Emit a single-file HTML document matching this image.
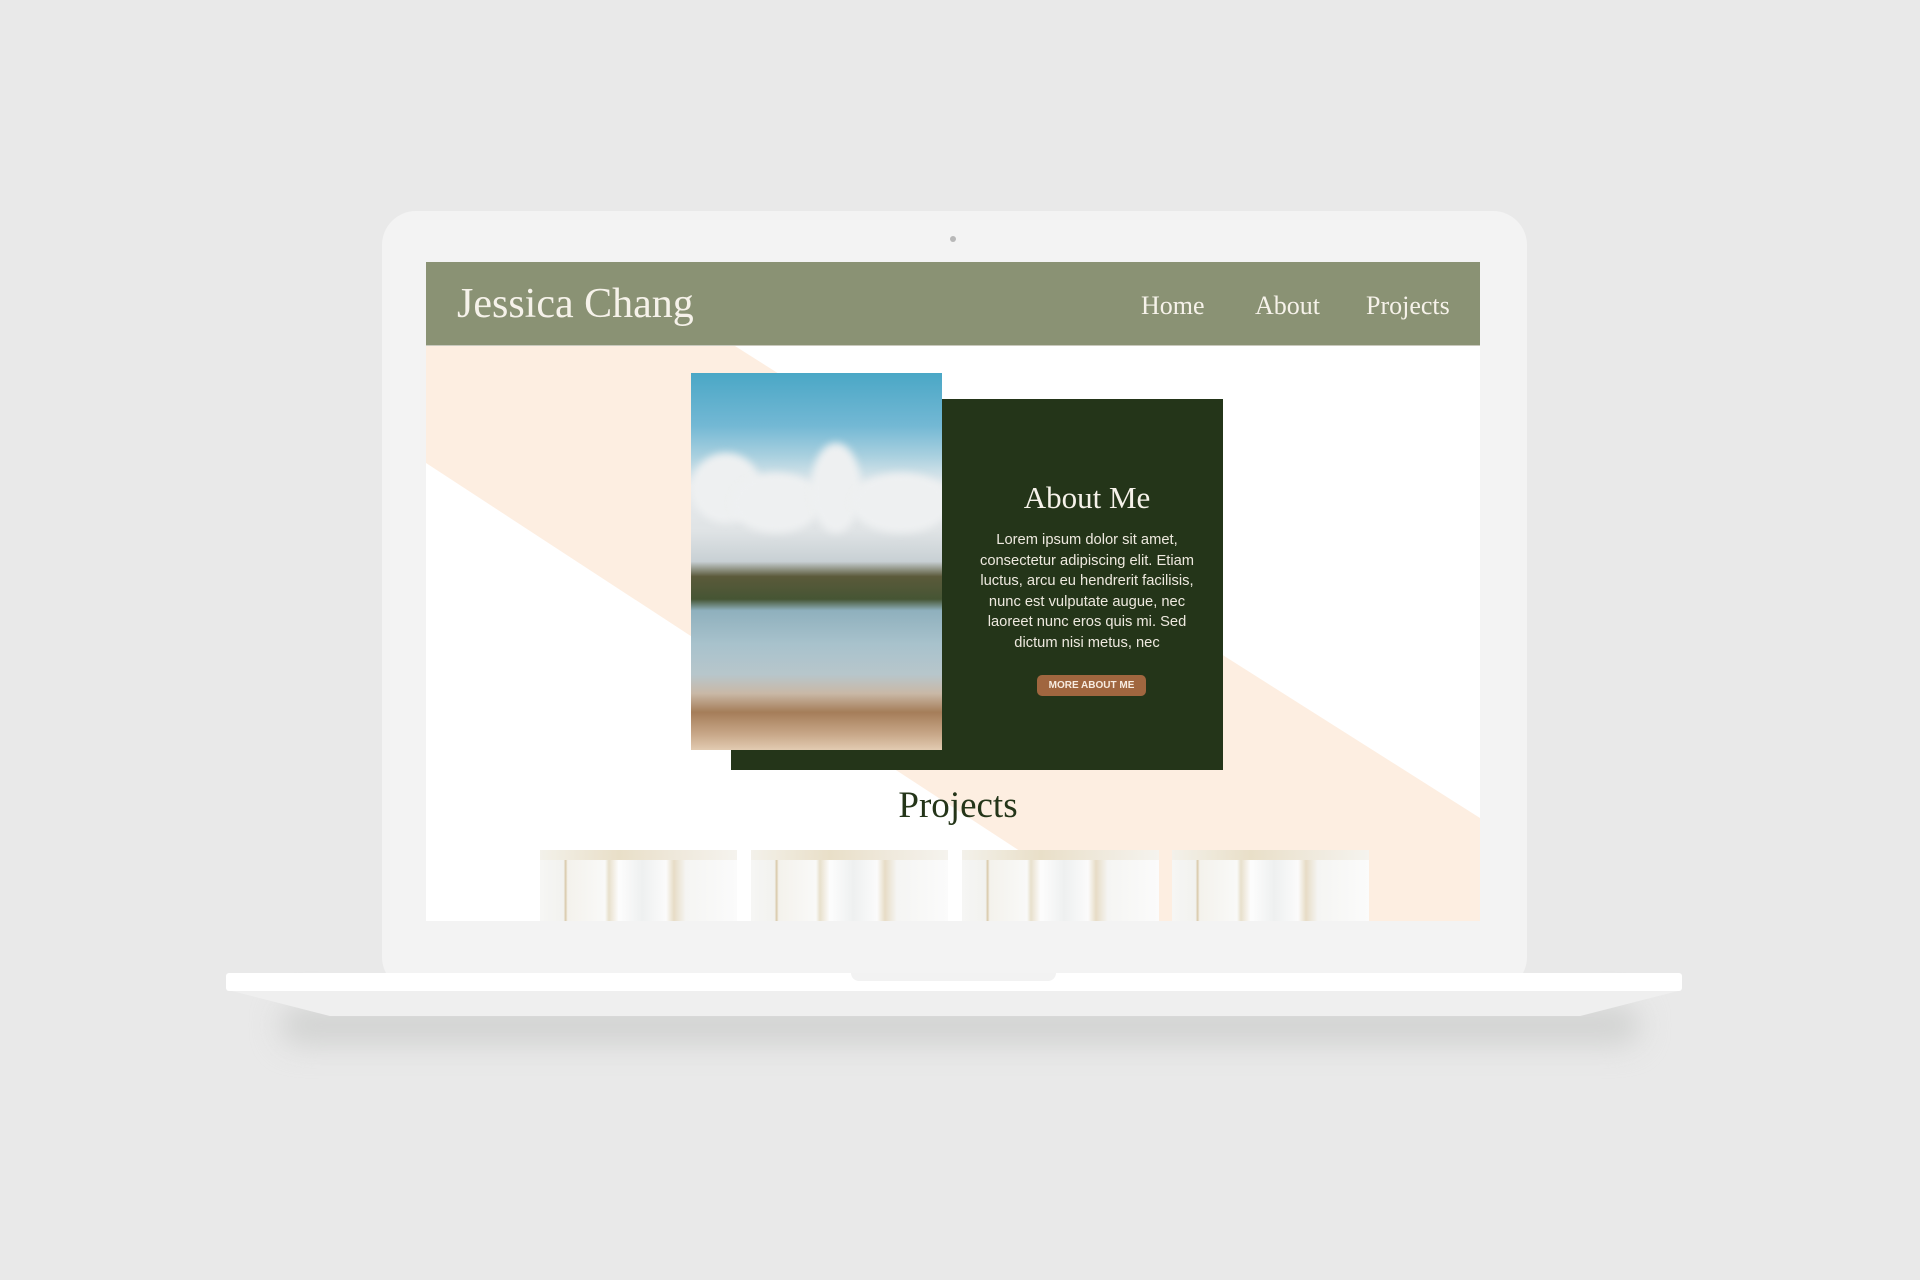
<!DOCTYPE html>
<html><head><meta charset="utf-8"><style>
*{margin:0;padding:0;box-sizing:border-box}
body{width:1920px;height:1280px;background:#e9e9e9;position:relative;overflow:hidden;font-family:"Liberation Sans",sans-serif}
.abs{position:absolute}
.lid{left:382px;top:211px;width:1145px;height:780px;background:#f3f3f3;border-radius:34px}
.cam{left:950px;top:236px;width:6px;height:6px;border-radius:50%;background:#b8b8b8}
.screen{left:426px;top:262px;width:1054px;height:659px;background:#fff;overflow:hidden}
.hdr{left:0;top:0;width:1054px;height:84px;background:#8a9274;border-bottom:1px solid #c9c9bd}
.serif{font-family:"Liberation Serif",serif;color:#f6f2ea}
.photo{left:265px;top:111px;width:251px;height:377px;overflow:hidden;background:
linear-gradient(180deg,#4aa7c6 0%,#73b8d4 14%,#a9d0df 22%,#e9ecee 30%,#dfe3e5 42%,#c8d0d4 50%,#5b5a3a 54%,#465534 60%,#8fb0bd 63%,#a8c2cc 72%,#b7c6cb 80%,#c9b8a6 85%,#a57d59 90%,#c9a98a 96%,#e2cbb2 100%)}
.cl{position:absolute;background:#eef0f1;border-radius:50%;filter:blur(4px)}
.dark{left:305px;top:137px;width:492px;height:371px;background:#243519}
.thumb{top:588px;width:197px;height:72px;background:
linear-gradient(90deg,#f6f6f4 0,#f2f2ef 12%,#d9c9aa 13%,#f4f2ec 14%,#f9f9f8 33%,#e8e0cc 35%,#fdfdfd 40%,#eef0f0 52%,#fbfbfb 64%,#e7dcc6 68%,#f5f5f3 74%,#fbfbfb 100%)}
.thumb:before{content:"";position:absolute;left:0;right:0;top:0;height:10px;background:linear-gradient(90deg,#f3f1ea 0,#e9dfc8 40%,#efe9dc 70%,#f5f3ee 100%)}
.body{left:511px;top:268px;width:300px;text-align:center;font-size:15px;line-height:20.5px;color:#eee9df;transform:scaleX(0.98);transform-origin:center top;white-space:nowrap}
</style></head><body>
<div class="abs" style="left:280px;top:1005px;width:1360px;height:40px;background:#d2d3d2;filter:blur(14px);border-radius:40px"></div>
<div class="abs lid"></div>
<div class="abs cam"></div>
<div class="abs screen">
<svg class="abs" style="left:0;top:0" width="1054" height="659"><polygon points="309,84 1054,556 1054,659 701,659 0,201 0,84" fill="#fdeee1"/></svg>
<div class="abs hdr">
<div class="abs serif" style="left:31px;top:18px;font-size:42px;">Jessica Chang</div>
<div class="abs serif" style="left:715px;top:29px;font-size:26px;">Home</div>
<div class="abs serif" style="left:829px;top:29px;font-size:26px;">About</div>
<div class="abs serif" style="left:940px;top:29px;font-size:26px;">Projects</div>
</div>
<div class="abs dark"></div>
<div class="abs photo">
<div class="cl" style="left:0;top:80px;width:70px;height:70px"></div>
<div class="cl" style="left:40px;top:100px;width:90px;height:60px"></div>
<div class="cl" style="left:120px;top:70px;width:50px;height:90px"></div>
<div class="cl" style="left:160px;top:100px;width:100px;height:60px"></div>
</div>
<div class="abs serif" style="left:540px;top:218px;width:242px;text-align:center;font-size:31px">About Me</div>
<div class="abs body">Lorem ipsum dolor sit amet,<br>consectetur adipiscing elit. Etiam<br>luctus, arcu eu hendrerit facilisis,<br>nunc est vulputate augue, nec<br>laoreet nunc eros quis mi. Sed<br>dictum nisi metus, nec</div>
<div class="abs" style="left:611px;top:413px;width:109px;height:21px;background:#a0663f;border-radius:5px;color:#f7ebe0;font-size:10px;font-weight:bold;text-align:center;line-height:21px">MORE ABOUT ME</div>
<div class="abs" style="left:432px;top:522px;width:200px;text-align:center;font-family:'Liberation Serif',serif;font-size:37px;color:#243519">Projects</div>
<div class="abs thumb" style="left:114px"></div>
<div class="abs thumb" style="left:325px"></div>
<div class="abs thumb" style="left:536px"></div>
<div class="abs thumb" style="left:746px"></div>
</div>
<div class="abs" style="left:228px;top:990px;width:1454px;height:26px;background:#efefef;clip-path:polygon(0 0,100% 0,93% 100%,7% 100%)"></div>
<div class="abs" style="left:226px;top:973px;width:1456px;height:18px;background:#fff;border-radius:3px"></div>
<div class="abs" style="left:851px;top:973px;width:205px;height:8px;background:#f2f2f2;border-radius:0 0 30px 30px"></div>
</body></html>
